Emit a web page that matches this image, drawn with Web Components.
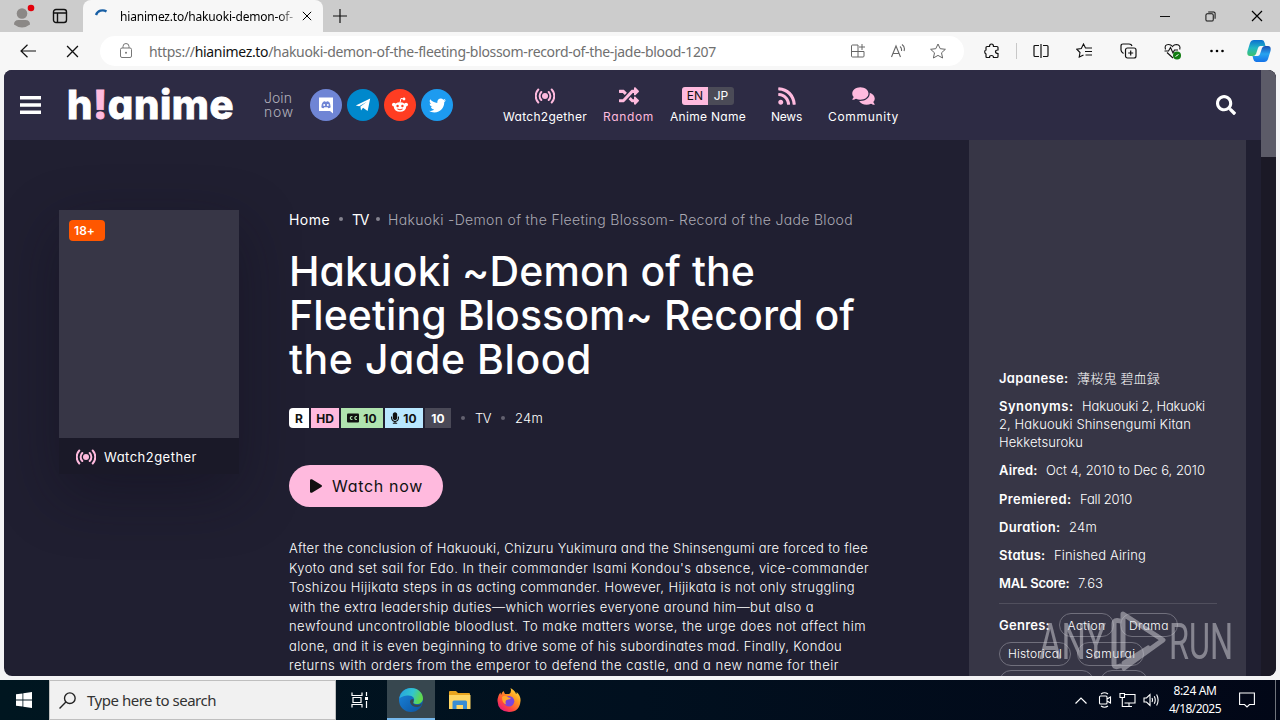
<!DOCTYPE html>
<html lang="en">
<head>
<meta charset="utf-8">
<title>hianimez.to/hakuoki-demon-of-the-fleeting-blossom</title>
<style>
  body {
    margin: 0;
    width: 1280px;
    height: 720px;
    overflow: hidden;
    display: flex;
    flex-direction: column;
    background: #f3f3f5;
    font-family: "Noto Sans", "Noto Sans CJK JP", sans-serif;
  }
</style>
</head>
<body>
<edge-tabs></edge-tabs>
<edge-toolbar></edge-toolbar>
<page-view>
  <site-header slot="header"></site-header>
  <anime-detail></anime-detail>
  <info-panel slot="aside"></info-panel>
</page-view>
<task-bar></task-bar>
<any-run></any-run>

<script>
(function() {

const icons = {
  // fontawesome shapes
  random: ['0 0 512 512', '<path fill="currentColor" d="M504.971 359.029c9.373 9.373 9.373 24.569 0 33.941l-80 79.984c-15.01 15.01-40.971 4.49-40.971-16.971V416h-58.785a12.004 12.004 0 0 1-8.773-3.812l-70.556-75.596 53.333-57.143L352 336h32v-39.981c0-21.438 25.943-31.998 40.971-16.971l80 79.981zM12 176h84l52.781 56.551 53.333-57.143-70.556-75.596A11.999 11.999 0 0 0 122.785 96H12c-6.627 0-12 5.373-12 12v56c0 6.627 5.373 12 12 12zm372 0v39.984c0 21.46 25.961 31.98 40.971 16.971l80-79.984c9.373-9.373 9.373-24.569 0-33.941l-80-79.981C409.943 24.021 384 34.582 384 56.019V96h-58.785a12.004 12.004 0 0 0-8.773 3.812L96 336H12c-6.627 0-12 5.373-12 12v56c0 6.627 5.373 12 12 12h110.785c3.326 0 6.503-1.381 8.773-3.812L352 176h32z"/>'],
  search: ['0 0 512 512', '<path fill="currentColor" d="M505 442.7L405.3 343c-4.5-4.5-10.6-7-17-7H372c27.6-35.3 44-79.7 44-128C416 93.1 322.9 0 208 0S0 93.1 0 208s93.1 208 208 208c48.3 0 92.7-16.4 128-44v16.3c0 6.4 2.5 12.5 7 17l99.7 99.7c9.4 9.4 24.6 9.4 33.9 0l28.3-28.3c9.4-9.4 9.4-24.6.1-34zM208 336c-70.7 0-128-57.2-128-128 0-70.7 57.2-128 128-128 70.7 0 128 57.2 128 128 0 70.7-57.2 128-128 128z"/>'],
  rss: ['0 0 448 512', '<path fill="currentColor" d="M128.081 415.959c0 35.369-28.672 64.041-64.041 64.041S0 451.328 0 415.959s28.672-64.041 64.041-64.041 64.04 28.673 64.04 64.041zm175.66 47.25c-8.354-154.6-132.185-278.587-286.95-286.95C7.656 175.765 0 183.105 0 192.253v48.069c0 8.415 6.49 15.472 14.887 16.018 111.832 7.284 201.473 96.702 208.772 208.772.547 8.397 7.604 14.887 16.018 14.887h48.069c9.149.001 16.489-7.655 15.995-16.79zm144.249.288C439.596 229.677 251.465 40.445 16.503 32.01 7.473 31.686 0 38.981 0 48.016v48.068c0 8.625 6.835 15.645 15.453 15.999 191.179 7.839 344.627 161.316 352.465 352.465.353 8.618 7.373 15.453 15.999 15.453h48.068c9.034-.001 16.329-7.474 16.005-16.504z"/>'],
  comments: ['0 0 576 512', '<path fill="currentColor" d="M416 192c0-88.4-93.1-160-208-160S0 103.6 0 192c0 34.3 14.1 65.9 38 92-13.4 30.2-35.5 54.2-35.8 54.5-2.2 2.3-2.8 5.7-1.5 8.7S4.8 352 8 352c36.6 0 66.9-12.3 88.7-25 32.2 15.7 70.3 25 111.3 25 114.9 0 208-71.6 208-160zm122 220c23.9-26 38-57.7 38-92 0-66.9-53.5-124.2-129.3-148.1.9 6.6 1.3 13.3 1.3 20.1 0 105.9-107.7 192-240 192-10.8 0-21.3-.8-31.7-1.9C207.8 439.6 281.8 480 368 480c41 0 79.1-9.2 111.3-25 21.8 12.7 52.1 25 88.7 25 3.2 0 6.1-1.9 7.3-4.8 1.3-2.9.7-6.3-1.5-8.7-.3-.3-22.4-24.2-35.8-54.5z"/>'],
  play: ['0 0 448 512', '<path fill="currentColor" d="M424.4 214.7L72.4 6.6C43.8-10.3 0 6.1 0 47.9V464c0 37.5 40.7 60.1 72.4 41.3l352-208c31.4-18.5 31.5-64.1 0-82.6z"/>'],
  mic: ['0 0 352 512', '<path fill="currentColor" d="M176 352c53.02 0 96-42.98 96-96V96c0-53.02-42.98-96-96-96S80 42.98 80 96v160c0 53.02 42.98 96 96 96zm160-160h-16c-8.84 0-16 7.16-16 16v48c0 74.8-64.49 134.82-140.79 127.38C96.71 376.89 48 317.11 48 250.3V208c0-8.84-7.16-16-16-16H16c-8.84 0-16 7.16-16 16v40.16c0 89.64 63.97 169.55 152 181.69V464H96c-8.84 0-16 7.16-16 16v16c0 8.84 7.16 16 16 16h160c8.84 0 16-7.16 16-16v-16c0-8.84-7.16-16-16-16h-56v-33.77C285.71 418.47 352 344.9 352 256v-48c0-8.84-7.16-16-16-16z"/>'],
  twitter: ['0 0 512 512', '<path fill="currentColor" d="M459.37 151.716c.325 4.548.325 9.097.325 13.645 0 138.72-105.583 298.558-298.558 298.558-59.452 0-114.68-17.219-161.137-47.106 8.447.974 16.568 1.299 25.34 1.299 49.055 0 94.213-16.568 130.274-44.832-46.132-.975-84.792-31.188-98.112-72.772 6.498.974 12.995 1.624 19.818 1.624 9.421 0 18.843-1.3 27.614-3.573-48.081-9.747-84.143-51.98-84.143-102.985v-1.299c13.969 7.797 30.214 12.67 47.431 13.319-28.264-18.843-46.781-51.005-46.781-87.391 0-19.492 5.197-37.36 14.294-52.954 51.655 63.675 129.3 105.258 216.365 109.807-1.624-7.797-2.599-15.918-2.599-24.04 0-57.828 46.782-104.934 104.934-104.934 30.213 0 57.502 12.67 76.67 33.137 23.715-4.548 46.456-13.32 66.599-25.34-7.798 24.366-24.366 44.833-46.132 57.827 21.117-2.273 41.584-8.122 60.426-16.243-14.292 20.791-32.161 39.308-52.628 54.253z"/>'],
  telegram: ['0 0 16 16', '<path fill="currentColor" d="M.8 8.6 15.2 1.6 12.6 14 8 10.8 6 13.4 5.4 9.6 12 4.8 4.2 9.3z"/>'],
  reddit: ['0 0 18 18', '<g fill="currentColor"><ellipse cx="9" cy="11" rx="6.2" ry="4.8"/><circle cx="2.9" cy="8.6" r="1.9"/><circle cx="15.1" cy="8.6" r="1.9"/><circle cx="13" cy="3" r="1.4"/></g><path d="M9 6.5 10 2.4 13 3" fill="none" stroke="currentColor"/><g fill="#ff3d22"><circle cx="6.6" cy="10" r="1.2"/><circle cx="11.4" cy="10" r="1.2"/></g><path d="M6.4 13q2.6 1.6 5.2 0" fill="none" stroke="#ff3d22"/>'],
  discord: ['0 0 16 17', '<path fill="currentColor" d="M1 .5H15V16.5L12 14H1z"/><path fill="#6f85d5" d="M3.300 10.200Q3.300 6.500 5 4.900 6.300 4.100 7 4.300L7.300 4.700H8.700L9 4.300Q10 4.200 11.200 4.900 12.700 7 12.700 10.200 11.300 11.300 10.200 11.100L9.700 10.300H6.300L5.800 11.100Q4.500 11.300 3.300 10.200z"/><g fill="currentColor"><circle cx="6.200" cy="8" r="1"/><circle cx="9.800" cy="8" r="1"/></g>'],
  broadcast: ['0 0 20 16', '<circle cx="10" cy="8" r="3" fill="currentColor"/><g fill="none" stroke="currentColor" stroke-width="2" stroke-linecap="round"><path d="M6.300 4A5.600 5.600 0 0 0 6.300 12M13.700 4A5.600 5.600 0 0 1 13.700 12M3.300 1.500A9.500 9.500 0 0 0 3.300 14.500M16.700 1.500A9.500 9.500 0 0 1 16.700 14.500"/></g>'],
  cc: ['0 0 12 10', '<rect width="12" height="9" y=".5" rx="1" fill="currentColor"/><path d="M5.400 3.600A1.500 1.500 0 1 0 5.400 6.400M9.900 3.600A1.500 1.500 0 1 0 9.900 6.400" fill="none" stroke="#b0e3af" stroke-width="1.200"/>'],
  bars: ['0 0 21 18', '<path fill="currentColor" d="M0 0h21v3.500H0zM0 7.300h21v3.500H0zM0 14.500h21V18H0z"/>'],

  // browser chrome
  profile: ['0 0 26 26', '<g fill="#8b8886"><circle cx="12" cy="10.500" r="5.300"/><path d="M4 21.500Q4 17 8.500 17H15.500Q20 17 20 21.500 16 24.500 12 24.500T4 21.500"/></g><circle cx="21" cy="5" r="3.300" fill="#e3000b"/>'],
  tabs: ['0 0 16 16', '<rect x="1.500" y="1.500" width="13" height="13" rx="2.500" fill="none" stroke="#111" stroke-width="1.400"/><path d="M1.500 5H14.500M5.500 5V14" stroke="#111" stroke-width="1.400"/>'],
  spinner: ['0 0 16 16', '<path d="M2 7A7 7 0 0 1 12.500 3.500" fill="none" stroke="#185fa5" stroke-width="2.300"/>'],
  close: ['0 0 12 12', '<path d="M1 1 11 11M11 1 1 11" stroke="currentColor" stroke-width="1.200"/>'],
  plus: ['0 0 14 14', '<path d="M7 0V14M0 7H14" stroke="#111" stroke-width="1.200"/>'],
  back: ['0 0 16 14', '<path d="M16 7H1M7.500 .7 1 7 7.500 13.300" fill="none" stroke="#111" stroke-width="1.200"/>'],
  lock: ['0 0 14 16', '<rect x="1.500" y="5" width="11" height="9.500" rx="1.500" fill="none" stroke="#777"/><path d="M4 5V3.500A3 3 0 0 1 10 3.500V5" fill="none" stroke="#777"/><circle cx="7" cy="9.700" r="1" fill="#777"/>'],
  apps: ['0 0 16 16', '<path d="M8 2H2.500Q1.500 2 1.500 3V13Q1.500 14 2.500 14H13Q14 14 14 13V8.500H1.500M8 2V14M12 1V7M9 4H15" fill="none" stroke="#666"/>'],
  aloud: ['0 0 16 16', '<path d="M1.500 14 6 3 10.500 14M3 10.500H9M10 3.500Q12 5 11.500 8M12 1.500Q15.500 4 14 8" fill="none" stroke="#666" stroke-width="1.100"/>'],
  star: ['0 0 16 16', '<path d="M8 1 10.200 5.700 15.400 6.300 11.500 9.800 12.600 15 8 12.400 3.400 15 4.500 9.800 .6 6.300 5.800 5.700z" fill="none" stroke="#666" stroke-linejoin="round"/>'],
  puzzle: ['0 0 16 16', '<path d="M5.500 3.500Q5.500 1 7.500 1T9.500 3.500H13Q14 3.500 14 4.500V7Q11.500 7 11.500 8.700T14 10.500V13.500Q14 14.500 13 14.500H9.500Q9.500 12.500 7.500 12.500T5.500 14.500H3Q2 14.500 2 13.500V11Q.7 10.500 .7 8.800T2 7V4.500Q2 3.500 3 3.500z" fill="none" stroke="#111" stroke-width="1.200"/>'],
  split: ['0 0 16 16', '<path d="M6 2.500H2Q1 2.500 1 3.500V12.500Q1 13.500 2 13.500H6M10 2.500H14Q15 2.500 15 3.500V12.500Q15 13.500 14 13.500H10M8 1V15" fill="none" stroke="#111" stroke-width="1.200"/>'],
  favs: ['0 0 17 16', '<path d="M15 5H9.500L7.500 1 5.300 5.500 .8 6.200 4 9.500 3.200 14 7.500 12M9 8.500H16M9.500 12H16M11 5H16" fill="none" stroke="#111" stroke-width="1.100"/>'],
  collect: ['0 0 17 16', '<rect x="5.500" y="5" width="10.500" height="10" rx="2" fill="none" stroke="#111" stroke-width="1.200"/><path d="M3.500 10.500Q1 9 1 7V3Q1 1 3 1H9Q11.500 1 12 3M10.700 7.500V12.500M8.200 10H13.200" fill="none" stroke="#111" stroke-width="1.200"/>'],
  health: ['0 0 18 17', '<path d="M1.500 6.500Q0 1.500 4.500 1.500 7 1.500 8.500 3.500 10 1.500 12.500 1.500 17 2 15.700 6.500M3 9.500 9 15M.5 8H4.500L6.500 4.500 9 10 10.500 7H14" fill="none" stroke="#111" stroke-width="1.100"/><circle cx="13" cy="12.500" r="4" fill="#107c10"/><path d="M11.500 13.500 14.500 11.500" stroke="#fff"/>'],
  dots: ['0 0 16 4', '<circle cx="2.500" cy="2" r="1.300"/><circle cx="8" cy="2" r="1.300"/><circle cx="13.500" cy="2" r="1.300"/>'],
  copilot: ['0 0 24 24', '<defs><linearGradient id="c1" x1="0" y1="0" x2="0" y2="1"><stop offset="0" stop-color="#0b6fd0"/><stop offset=".5" stop-color="#23b7c4"/><stop offset="1" stop-color="#3cc26d"/></linearGradient><linearGradient id="c2" x1="0" y1="0" x2="0" y2="1"><stop offset="0" stop-color="#1b4db2"/><stop offset=".5" stop-color="#27a4f0"/><stop offset="1" stop-color="#1472e8"/></linearGradient></defs><path d="M7 1H15Q17 1 17.700 4L18.500 7H13.500Q11.500 7 11 9L9 15Q8 17 6 17H3Q-.5 17 .5 12L3 4Q4 1 7 1z" fill="url(#c1)"/><path d="M17 23H9Q7 23 6.300 20L5.500 17H10.500Q12.500 17 13 15L15 9Q16 7 18 7H21Q24.500 7 23.500 12L21 20Q20 23 17 23z" fill="url(#c2)"/>'],
  min: ['0 0 10 10', '<path d="M0 5.500H10" stroke="#111"/>'],
  restore: ['0 0 12 12', '<rect x="1" y="3" width="8" height="8" rx="1.500" fill="none" stroke="#111" stroke-width="1.100"/><path d="M3.500 1H9.500Q11 1 11 2.500V8.500" fill="none" stroke="#111" stroke-width="1.100"/>'],

  // taskbar
  windows: ['0 0 16 16', '<path fill="#fff" d="M0 2.300 6.500 1.400V7.500H0zM7.300 1.300 16 0V7.500H7.300zM0 8.400H6.500V14.600L0 13.700zM7.300 8.400H16V16L7.300 14.700z"/>'],
  lens: ['0 0 16 16', '<circle cx="10.200" cy="5.800" r="5" fill="none" stroke="#222" stroke-width="1.300"/><path d="M6.500 9.500 .5 15.500" stroke="#222" stroke-width="1.300"/>'],
  taskview: ['0 0 18 16', '<path d="M1 .5V3.500H11V.5M1 15.500V12.500H11V15.500M2 5.500H10V10.500H2zM15.500 0V4M15.500 9V16" fill="none" stroke="#fff" stroke-width="1.200"/><path d="M14 5H17V8H14z" fill="#fff"/>'],
  edge: ['0 0 24 24', '<defs><linearGradient id="e1" x1="0" y1="0" x2="1" y2=".3"><stop offset="0" stop-color="#259fe0"/><stop offset=".6" stop-color="#32c5cf"/><stop offset="1" stop-color="#60d84c"/></linearGradient><linearGradient id="e2" x1="0" y1="0" x2="1" y2="1"><stop offset="0" stop-color="#1a86dd"/><stop offset="1" stop-color="#0d539f"/></linearGradient></defs><circle cx="12" cy="12" r="12" fill="url(#e2)"/><path d="M.3 10.500C1.500 4 6.500 0 12 0 19 0 24 5 24 10.500 24 14 21 16 18 16 14.500 16 13.800 14.700 14.500 13.800 16.500 11 14 7.500 9.500 7.500 5.500 7.500 1.500 9 .3 10.500z" fill="url(#e1)"/><path d="M14.500 13.800Q13 16.500 18 17 21 17 22.800 15.500 22 18.500 18.500 19 12 19 11 14 11 11 14.500 11z" fill="#37474f"/>'],
  folder: ['0 0 22 20', '<path d="M0 2Q0 1 1 1H7L9 3H20Q21 3 21 4V18H0z" fill="#e9a51f"/><path d="M0 5H21.500V19H0z" fill="#ffd664"/><path d="M3.500 19V12Q3.500 10.500 5 10.500H16.500Q18 10.500 18 12V19H14V15H7.500V19z" fill="#398dd3"/>'],
  firefox: ['0 0 24 24', '<defs><linearGradient id="f1" x1="1" y1="0" x2=".2" y2="1"><stop offset="0" stop-color="#fff24a"/><stop offset=".4" stop-color="#ff9a20"/><stop offset=".75" stop-color="#ff4440"/><stop offset="1" stop-color="#e31587"/></linearGradient></defs><path d="M13.500 0Q18.500 3 19 6 20 5.500 19.500 4 24 8 23.500 13 22.500 24 12 24 1 23.500 .5 13 .5 8 3.500 4.500L4 7Q5 4 6.500 3L8 6H12Q15 4 13.500 0z" fill="url(#f1)"/><circle cx="12" cy="13.300" r="5.300" fill="#7a45dd"/><path d="M5 9Q8 6.500 11.500 9.500L14 10Q12 12 9.500 12 7.500 14 9.500 16.500 5 16 5 9z" fill="#ffa52b"/>'],
  up: ['0 0 12 7', '<path d="M.5 6.500 6 1 11.500 6.500" fill="none" stroke="#fff" stroke-width="1.200"/>'],
  cam: ['0 0 14 16', '<path d="M3 2Q6.500 -.5 10 2M3 14Q6.500 16.500 10 14M1.500 5Q1.500 4 2.500 4H8Q9 4 9 5V11Q9 12 8 12H2.500Q1.500 12 1.500 11zM9 7 12.500 5V11L9 9" fill="none" stroke="#fff" stroke-width="1.100"/>'],
  net: ['0 0 17 16', '<path d="M5.500 2.500H16V11H5.500M1 1.500H5.500V5.500H1zM3.300 5.500V14.500H13M10 11V14.500" fill="none" stroke="#fff" stroke-width="1.100"/>'],
  vol: ['0 0 17 14', '<path d="M1 5H3.500L7 1.500V12.500L3.500 9H1zM9 5Q10 7 9 9M11.300 3.200Q13.200 7 11.300 10.800M13.600 1.500Q16.600 7 13.600 12.500" fill="none" stroke="#fff" stroke-width="1.100"/>'],
  note: ['0 0 16 16', '<path d="M.6 1H15.400V12.500H10.500L8 15 5.500 12.500H.6z" fill="none" stroke="#fff" stroke-width="1.100"/>']
};

// helper: class with a template that is cloned in the shadow root
function define(name, html) {
  const tmpl = document.createElement('template');
  tmpl.innerHTML = html;
  customElements.define(name, class extends HTMLElement {
    constructor() {
      super();
      this.attachShadow({mode: 'open'});
      this.shadowRoot.appendChild(tmpl.content.cloneNode(true));
    }
  });
}

customElements.define('svg-icon', class SvgIcon extends HTMLElement {
  constructor() {
    super();
    this.attachShadow({mode: 'open'});
  }
  connectedCallback() {
    const [box, body] = icons[this.getAttribute('name')];
    const w = this.getAttribute('w');
    const h = this.getAttribute('h') || w;
    this.shadowRoot.innerHTML = `
      <style>
        :host { display: block; flex: none; width: ${w}px; height: ${h}px; }
        svg { display: block; }
      </style>
      <svg width="${w}" height="${h}" viewBox="${box}">${body}</svg>`;
  }
});

define('edge-tabs', `
<style>
  :host { display: flex; align-items: stretch; height: 32px; flex: none; background: #ccc; font-size: 12px; }
  .left { width: 83px; display: flex; align-items: center; gap: 16px; padding-left: 10px; box-sizing: border-box; }
  .left svg-icon:first-child { margin-top: -1px; }
  .tab { width: 240px; display: flex; align-items: center; background: #f7f7f7; border-radius: 8px 8px 0 0; padding-left: 11px; box-sizing: border-box; }
  .title { margin-left: 10px; width: 182px; -webkit-mask-image: linear-gradient(90deg, #000 158px, transparent 180px); mask-image: linear-gradient(90deg, #000 158px, transparent 180px); }
  .add { margin: auto 0 auto 10px; }
  .win { margin-left: auto; display: flex; align-items: center; gap: 35px; padding-right: 17px; }
</style>
<div class="left"><svg-icon name="profile" w="26"></svg-icon><svg-icon name="tabs" w="16"></svg-icon></div>
<div class="tab">
  <svg-icon name="spinner" w="16"></svg-icon>
  <div class="title"><fit-text w="173">hianimez.to/hakuoki-demon-of-</fit-text></div>
  <svg-icon name="close" w="10"></svg-icon>
</div>
<svg-icon class="add" name="plus" w="14"></svg-icon>
<div class="win"><svg-icon name="min" w="10"></svg-icon><svg-icon name="restore" w="11"></svg-icon><svg-icon name="close" w="12"></svg-icon></div>
`);

define('edge-toolbar', `
<style>
  :host { display: flex; align-items: center; height: 38px; flex: none; background: #f7f7f7; padding: 0 10px 0 20px; box-sizing: border-box; font-size: 14px; color: #707070; }
  .stop { margin-left: 30px; }
  .url { display: flex; align-items: center; width: 864px; height: 30px; flex: none; margin-left: 21px; padding: 0 18px; box-sizing: border-box; background: #fff; border-radius: 15px; }
  .url fit-text { margin-left: 15px; }
  b { color: #111; font-weight: 400; }
  .acts { display: flex; gap: 24px; margin-left: auto; }
  .tools { display: flex; align-items: center; gap: 27px; padding-left: 20px; }
  .sep { width: 1px; height: 16px; margin: 0 -11px; background: #c8c8c8; }
  .tools svg-icon:last-child { margin-left: -5px; }
</style>
<svg-icon name="back" w="16" h="14"></svg-icon>
<svg-icon class="stop" name="close" w="13" style="color:#111"></svg-icon>
<div class="url">
  <svg-icon name="lock" w="16"></svg-icon>
  <fit-text w="567">https://<b>hianimez.to</b>/hakuoki-demon-of-the-fleeting-blossom-record-of-the-jade-blood-1207</fit-text>
  <div class="acts"><svg-icon name="apps" w="16"></svg-icon><svg-icon name="aloud" w="16"></svg-icon><svg-icon name="star" w="16"></svg-icon></div>
</div>
<div class="tools">
  <svg-icon name="puzzle" w="16"></svg-icon><span class="sep"></span>
  <svg-icon name="split" w="16"></svg-icon><svg-icon name="favs" w="17" h="16"></svg-icon>
  <svg-icon name="collect" w="17" h="16"></svg-icon><svg-icon name="health" w="18" h="17"></svg-icon>
  <svg-icon name="dots" w="16" h="4"></svg-icon><svg-icon name="copilot" w="24"></svg-icon>
</div>
`);

define('page-view', `
<style>
  :host { display: flex; height: 606px; flex: none; margin: 0 4px 4px; border-radius: 8px; overflow: hidden; background: #201f31; color: #fff;
    font-family: Inter, "Noto Sans CJK JP", sans-serif; font-feature-settings: "cv11"; font-weight: 300; }
  .page { width: 1257px; }
  .cols { display: flex; height: 536px; }
  .bar { width: 15px; background: #1b1926; }
  .thumb { height: 87px; background: #5c5b68; }
</style>
<div class="page">
  <slot name="header"></slot>
  <div class="cols"><slot></slot><slot name="aside"></slot></div>
</div>
<div class="bar"><div class="thumb"></div></div>
`);

define('social-link', `
<style>
  :host { display: grid; place-items: center; width: 32px; height: 32px; border-radius: 50%; color: #fff; }
</style>
<slot></slot>
`);

define('nav-item', `
<style>
  :host { display: flex; flex-direction: column; align-items: center; font-size: 12px; line-height: 16px; font-weight: 400; }
  .icon { height: 20px; margin-bottom: 3px; display: flex; align-items: center; color: #ffbade; }
</style>
<div class="icon"><slot name="icon"></slot></div>
<slot></slot>
`);

define('site-header', `
<style>
  :host { display: flex; align-items: center; height: 70px; background: #2d2b44; padding: 0 25px 0 16px; box-sizing: border-box; }
  .logo { margin: 0 0 0 26px; font-size: 40px; line-height: 44px; font-weight: 800; -webkit-text-stroke: .8px currentColor; }
  .logo span { color: #ffbade; }
  .join { margin-left: 30px; width: 46px; font-size: 14px; line-height: 14px; color: #b0afbb; }
  .join fit-text { display: block; }
  .social { display: flex; gap: 5px; }
  nav { display: flex; margin-left: 50px; gap: 16px; }
  .lang { display: flex; height: 18px; border-radius: 3px; overflow: hidden; font-size: 12px; line-height: 18px; text-align: center; background: #4b4b57; color: #fff; }
  .lang span { width: 26px; }
  .lang .on { background: #ffbade; color: #111; }
  .find { margin-left: auto; }
</style>
<svg-icon name="bars" w="21" h="18"></svg-icon>
<div class="logo"><fit-text w="167">h<span>!</span>anime</fit-text></div>
<div class="join"><fit-text w="28">Join</fit-text><fit-text w="30">now</fit-text></div>
<div class="social">
  <social-link style="background:#6f85d5"><svg-icon name="discord" w="16" h="17"></svg-icon></social-link>
  <social-link style="background:#08c"><svg-icon name="telegram" w="16"></svg-icon></social-link>
  <social-link style="background:#ff3d22"><svg-icon name="reddit" w="18"></svg-icon></social-link>
  <social-link style="background:#1d9bf0"><svg-icon name="twitter" w="17"></svg-icon></social-link>
</div>
<nav>
  <nav-item><svg-icon slot="icon" name="broadcast" w="20" h="16"></svg-icon><fit-text w="84">Watch2gether</fit-text></nav-item>
  <nav-item style="color:#ffbade"><svg-icon slot="icon" name="random" w="20"></svg-icon><fit-text w="51">Random</fit-text></nav-item>
  <nav-item><div slot="icon" class="lang"><span class="on">EN</span><span>JP</span></div><fit-text w="76">Anime Name</fit-text></nav-item>
  <nav-item style="margin-left:9px"><svg-icon slot="icon" name="rss" w="18" h="20"></svg-icon><fit-text w="31">News</fit-text></nav-item>
  <nav-item style="margin-left:10px"><svg-icon slot="icon" name="comments" w="23" h="20"></svg-icon><fit-text w="71">Community</fit-text></nav-item>
</nav>
<svg-icon class="find" name="search" w="20"></svg-icon>
`);

define('poster-card', `
<style>
  :host { display: block; width: 180px; height: 264px; flex: none; background: #1a1928; box-shadow: 0 20px 60px rgba(15, 14, 28, .45); }
  .pic { height: 228px; background: #373646; padding: 10px; box-sizing: border-box; }
  .age { width: 36px; height: 21px; padding-left: 5px; box-sizing: border-box; border-radius: 4px; background: #ff5700; font-size: 12px; line-height: 21px; font-weight: 600; }
  .w2g { display: flex; align-items: center; gap: 8px; height: 37px; padding-left: 17px; font-size: 13px; font-weight: 400; }
  svg-icon { color: #ffbade; }
</style>
<div class="pic"><div class="age"><fit-text w="21">18+</fit-text></div></div>
<div class="w2g"><svg-icon name="broadcast" w="20" h="16"></svg-icon><fit-text w="93">Watch2gether</fit-text></div>
`);

define('tick-item', `
<style>
  :host { display: flex; align-items: center; justify-content: center; gap: 4px; height: 20px; font-size: 12px; font-weight: 700; color: #111; }
</style>
<slot></slot>
`);

define('anime-detail', `
<style>
  :host { display: flex; gap: 50px; width: 965px; box-sizing: border-box; padding: 70px 0 0 55px; }
  .crumb { display: flex; align-items: center; height: 18px; font-size: 14px; font-weight: 400; }
  .crumb i, .ticks i { width: 4px; height: 4px; border-radius: 50%; background: #84838f; margin: 0 9px; }
  .crumb i + fit-text + i { margin: 0 8px; }
  .crumb .cur { color: #aaa9b3; font-weight: 300; }
  h2 { margin: 21px 0 27px; font-size: 41px; line-height: 44px; font-weight: 500; }
  h2 fit-text, p fit-text { display: block; }
  .ticks { display: flex; align-items: center; gap: 2px; font-size: 13px; font-weight: 300; }
  .ticks i { margin: 0 8px; background: #62616f; }
  .play { display: flex; align-items: center; gap: 10px; width: 154px; height: 42px; margin: 37px 0 32px; padding: 0 0 1px 21px; box-sizing: border-box; border-radius: 21px; background: #ffbade; color: #111; font-size: 16px; font-weight: 400; }
  p { margin: 0; font-size: 13px; line-height: 19.5px; }
</style>
<poster-card></poster-card>
<div>
  <div class="crumb"><fit-text w="41">Home</fit-text><i></i><fit-text w="16">TV</fit-text><i></i><fit-text class="cur" w="465">Hakuoki -Demon of the Fleeting Blossom- Record of the Jade Blood</fit-text></div>
  <h2><fit-text w="466">Hakuoki ~Demon of the</fit-text><fit-text w="566">Fleeting Blossom~ Record of</fit-text><fit-text w="303">the Jade Blood</fit-text></h2>
  <div class="ticks">
    <tick-item style="width:20px;background:#fff;border-radius:4px 0 0 4px">R</tick-item>
    <tick-item style="width:28px;background:#ffbade">HD</tick-item>
    <tick-item style="width:42px;background:#b0e3af"><svg-icon name="cc" w="12" h="10"></svg-icon>10</tick-item>
    <tick-item style="width:38px;background:#b9e7ff"><svg-icon name="mic" w="8" h="12"></svg-icon>10</tick-item>
    <tick-item style="width:26px;background:#4a4957;color:#fff">10</tick-item>
    <i></i><fit-text w="16">TV</fit-text><i></i><fit-text w="28">24m</fit-text>
  </div>
  <div class="play"><svg-icon name="play" w="12" h="14"></svg-icon><fit-text w="91">Watch now</fit-text></div>
  <p>
    <fit-text w="579">After the conclusion of Hakuouki, Chizuru Yukimura and the Shinsengumi are forced to flee</fit-text>
    <fit-text w="580">Kyoto and set sail for Edo. In their commander Isami Kondou's absence, vice-commander</fit-text>
    <fit-text w="566">Toshizou Hijikata steps in as acting commander. However, Hijikata is not only struggling</fit-text>
    <fit-text w="525">with the extra leadership duties—which worries everyone around him—but also a</fit-text>
    <fit-text w="577">newfound uncontrollable bloodlust. To make matters worse, the urge does not affect him</fit-text>
    <fit-text w="553">alone, and it is even beginning to drive some of his subordinates mad. Finally, Kondou</fit-text>
    <fit-text w="550">returns with orders from the emperor to defend the castle, and a new name for their</fit-text>
  </p>
</div>
`);

define('info-row', `
<style>
  :host { display: block; margin-bottom: 10.2px; font-size: 13px; line-height: 18px; }
  .line { display: flex; gap: 8.500px; }
  b { font-weight: 600; }
</style>
<div class="line"><b><slot name="label"></slot></b><slot></slot></div>
<slot name="more"></slot>
`);

define('genre-chip', `
<style>
  :host { display: flex; align-items: center; justify-content: center; height: 24px; box-sizing: border-box; border: 1px solid #706f7c; border-radius: 12px; font-size: 12px; }
</style>
<slot></slot>
`);

define('info-panel', `
<style>
  :host { display: block; width: 277px; height: 536px; box-sizing: border-box; padding: 229px 29px 0 30px; background: #373646; }
  [slot=more] { display: block; }
  hr { height: 1px; margin: 10.500px 0 9.500px; border: 0; background: #504f5d; }
  .genres { display: flex; flex-wrap: wrap; align-items: center; gap: 4.500px 6px; }
  .genres b { font-size: 13px; font-weight: 600; margin-right: 3px; }
</style>
<info-row><fit-text slot="label" w="69.500">Japanese:</fit-text><fit-text w="83">薄桜鬼 碧血録</fit-text></info-row>
<info-row><fit-text slot="label" w="74.500">Synonyms:</fit-text><fit-text w="123">Hakuouki 2, Hakuoki</fit-text>
  <fit-text slot="more" w="192">2, Hakuouki Shinsengumi Kitan</fit-text><fit-text slot="more" w="84">Hekketsuroku</fit-text></info-row>
<info-row><fit-text slot="label" w="38.500">Aired:</fit-text><fit-text w="159">Oct 4, 2010 to Dec 6, 2010</fit-text></info-row>
<info-row><fit-text slot="label" w="72.500">Premiered:</fit-text><fit-text w="52">Fall 2010</fit-text></info-row>
<info-row><fit-text slot="label" w="61.500">Duration:</fit-text><fit-text w="28">24m</fit-text></info-row>
<info-row><fit-text slot="label" w="46.500">Status:</fit-text><fit-text w="92">Finished Airing</fit-text></info-row>
<info-row><fit-text slot="label" w="70.500">MAL Score:</fit-text><fit-text w="25">7.63</fit-text></info-row>
<hr>
<div class="genres">
  <b><fit-text w="51">Genres:</fit-text></b>
  <genre-chip style="width:55px"><fit-text w="38">Action</fit-text></genre-chip>
  <genre-chip style="width:58px"><fit-text w="40">Drama</fit-text></genre-chip>
  <genre-chip style="width:72px"><fit-text w="54">Historical</fit-text></genre-chip>
  <genre-chip style="width:67px;margin-right:30px"><fit-text w="50">Samurai</fit-text></genre-chip>
  <genre-chip style="width:95px"></genre-chip>
  <genre-chip style="width:48px"></genre-chip>
</div>
`);

define('task-bar', `
<style>
  :host { display: flex; align-items: center; height: 40px; flex: none; background: linear-gradient(90deg, #001620, #01101f 50%, #020717); color: #fff; }
  .start { width: 48px; padding-right: 1px; display: grid; place-items: center; }
  .box { display: flex; align-items: center; gap: 11px; width: 287px; height: 40px; padding-left: 9px; box-sizing: border-box; background: #f1f1f1; border: 1px solid #bfbfbf; color: #333; font-size: 15px; }
  .app { width: 48px; height: 40px; margin-right: 1px; box-sizing: border-box; display: grid; place-items: center; }
  .app.on { background: #37474f; border-bottom: 2px solid #76b9ed; padding-top: 1px; }
  .tray { margin-left: auto; display: flex; align-items: center; height: 40px; gap: 7px; padding-right: 3px; border-right: 1px solid #70747c; margin-right: 4px; }
  .clock { display: flex; flex-direction: column; align-items: center; font-size: 12px; line-height: 18px; margin-left: 2px; }
</style>
<div class="start"><svg-icon name="windows" w="16"></svg-icon></div>
<div class="box"><svg-icon name="lens" w="17"></svg-icon><fit-text w="129">Type here to search</fit-text></div>
<div class="app"><svg-icon name="taskview" w="18" h="16"></svg-icon></div>
<div class="app on" style="margin-left:2px"><svg-icon name="edge" w="24"></svg-icon></div>
<div class="app"><svg-icon name="folder" w="22" h="20"></svg-icon></div>
<div class="app"><svg-icon name="firefox" w="24"></svg-icon></div>
<div class="tray">
  <svg-icon name="up" w="12" h="7" style="margin-right:4px"></svg-icon>
  <svg-icon name="cam" w="14" h="16"></svg-icon>
  <svg-icon name="net" w="17" h="16"></svg-icon>
  <svg-icon name="vol" w="17" h="14"></svg-icon>
  <div class="clock"><fit-text w="43">8:24 AM</fit-text><fit-text w="52">4/18/2025</fit-text></div>
  <svg-icon name="note" w="16" style="margin:0 17px 0 11px"></svg-icon>
</div>
`);

// recording watermark, lies over the page
define('any-run', `
<style>
  :host { position: absolute; left: 1036px; top: 606px; opacity: .5; }
  svg { display: block; }
  text { font: 400 50px Roboto, sans-serif; fill: #d4d3da; }
</style>
<svg width="230" height="70">
  <text x="3" y="53" textLength="67" lengthAdjust="spacingAndGlyphs">ANY</text>
  <g fill="none" stroke="#d4d3da" stroke-width="5" stroke-linejoin="round" stroke-linecap="round">
    <path d="M84 15Q78 13 78 18V58Q78 62 84 60"/>
    <path d="M87 49V8L127 34 88 62V57L112 42"/>
  </g>
  <text x="133" y="53" textLength="64" lengthAdjust="spacingAndGlyphs">RUN</text>
</svg>
`);

// one line of text, tracked so that it takes w pixels
customElements.define('fit-text', class FitText extends HTMLElement {
  constructor() {
    super();
    this.attachShadow({mode: 'open'});
    this.shadowRoot.innerHTML = `
      <style>:host { display: inline-block; white-space: nowrap; } span { display: inline-block; }</style>
      <span><slot></slot></span>`;
  }
  connectedCallback() {
    const w = parseFloat(this.getAttribute('w'));
    const natural = this.shadowRoot.querySelector('span').getBoundingClientRect().width;
    this.style.letterSpacing = (w - natural) / this.textContent.length + 'px';
    this.style.width = w + 'px';
  }
});

})();
</script>
</body>
</html>
